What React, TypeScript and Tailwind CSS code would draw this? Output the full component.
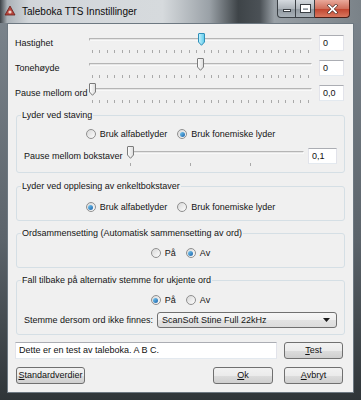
import React from "react";

const FONT = "font-['Liberation_Sans',Arial,sans-serif]";

function Thumb({ active }: { active?: boolean }) {
  return (
    <svg width="7" height="13" viewBox="0 0 7 13" className="block">
      <defs>
        <linearGradient id={active ? "ta" : "tn"} x1="0" y1="0" x2="1" y2="0">
          <stop offset="0" stopColor={active ? "#c9f3ff" : "#ffffff"} />
          <stop offset="1" stopColor={active ? "#5ccbea" : "#dcdcdc"} />
        </linearGradient>
      </defs>
      <path
        d="M1 0.5 H6 Q6.5 0.5 6.5 1 V9 L3.5 12.3 L0.5 9 V1 Q0.5 0.5 1 0.5 Z"
        fill={`url(#${active ? "ta" : "tn"})`}
        stroke={active ? "#2f8fb8" : "#7b7b7b"}
        strokeWidth="1"
      />
    </svg>
  );
}

function Slider({ left, ticks, active }: { left: string; ticks: number; active?: boolean }) {
  return (
    <div className="relative h-[16px] flex-1">
      <div className="absolute left-0 right-0 top-[3px] h-[3px] border border-[#b5b5b5] border-b-[#f8f8f8] border-r-[#f8f8f8] bg-[#e6e6e6]" />
      <div className="absolute left-[3px] right-[3px] top-[15px] flex justify-between">
        {Array.from({ length: ticks }).map((_, i) => (
          <div key={i} className="w-px h-[3px] bg-[#a9a9a9]" />
        ))}
      </div>
      <div className="absolute top-[-2px]" style={{ left }}>
        <Thumb active={active} />
      </div>
    </div>
  );
}

function SliderTicks({ positions }: { positions: string[] }) {
  return (
    <>
      {positions.map((p, i) => (
        <div key={i} className="absolute top-[15px] w-px h-[3px] bg-[#a9a9a9]" style={{ left: p }} />
      ))}
    </>
  );
}

function TextBox({ value, className }: { value: string; className?: string }) {
  return (
    <div
      className={`h-[16px] bg-white border border-[#abadb3] border-l-[#e2e3ea] border-r-[#e2e3ea] border-b-[#e3e9ef] flex items-center pl-[3px] text-[9px] leading-[11px] text-[#111] ${className ?? ""}`}
    >
      {value}
    </div>
  );
}

function Radio({ checked, label }: { checked?: boolean; label: string }) {
  return (
    <div className="flex items-center gap-[4px]">
      <div className="w-[10px] h-[10px] rounded-full border border-[#8f8f8f] bg-gradient-to-br from-[#d8d8d8] to-[#fdfdfd] flex items-center justify-center">
        {checked && (
          <div className="w-[5px] h-[5px] rounded-full bg-gradient-to-br from-[#79cdf5] to-[#1a62a8]" />
        )}
      </div>
      <span>{label}</span>
    </div>
  );
}

function Button({ children, className }: { children: React.ReactNode; className?: string }) {
  return (
    <div
      className={`h-[17px] rounded-[3px] border border-[#707070] bg-[linear-gradient(to_bottom,#f2f2f2_0%,#ebebeb_50%,#dddddd_51%,#cfcfcf_100%)] flex items-center justify-center text-[9px] leading-[11px] text-[#111] ${className ?? ""}`}
    >
      {children}
    </div>
  );
}

function Group({ title, children, className }: { title: string; children: React.ReactNode; className?: string }) {
  return (
    <fieldset className={`mx-[8px] mr-[8px] border border-[#d5dfe5] rounded-[3px] ${className ?? ""}`}>
      <legend className="ml-[4px] px-[1px] leading-[11px]">{title}</legend>
      {children}
    </fieldset>
  );
}

export default function App() {
  return (
    <div className={`${FONT} w-[361px] h-[400px] flex flex-col bg-[linear-gradient(to_bottom,#7d868e,#5b636a_60%,#2f3538)] text-[9px] leading-[11px] text-[#141414]`}>
      {/* Title bar */}
      <div className="h-[23px] flex items-start bg-[linear-gradient(to_right,#3c4247_0%,#aab1b7_2%,#d2d6da_8%,#d6dadd_45%,#9aa1a7_58%,#3e4448_66%,#4b5156_72%,#99a0a6_76%,#7a8288_100%)]">
        <div className="ml-[4px] mt-[5px] w-[12px] h-[12px] flex items-center justify-center">
          <svg width="12" height="12" viewBox="0 0 12 12">
            <path d="M6 1 L11 10 H1 Z" fill="#b8443c" stroke="#6a1f1a" strokeWidth="0.8" />
            <circle cx="6" cy="7" r="1.6" fill="#e9d2c8" />
          </svg>
        </div>
        <div className="ml-[6px] mt-[6px] text-[10px] leading-[12px] text-[#0c0c0c]">Taleboka TTS Innstillinger</div>
        <div className="ml-auto mr-[11px] flex h-[19px]">
          <div className="w-[19px] h-[18px] rounded-bl-[4px] border border-[#3b4045] border-t-0 bg-[linear-gradient(to_bottom,#d5dadf,#aeb5bb_50%,#8f979e_51%,#a9b1b8)] flex items-center justify-center">
            <div className="w-[8px] h-[3px] bg-white border border-[#3a3f44] mt-[4px]" />
          </div>
          <div className="w-[19px] h-[18px] border border-l-0 border-[#3b4045] border-t-0 bg-[linear-gradient(to_bottom,#d5dadf,#aeb5bb_50%,#8f979e_51%,#a9b1b8)] flex items-center justify-center">
            <div className="w-[9px] h-[7px] border-2 border-white border-t-[3px] outline outline-1 outline-[#3a3f44]" />
          </div>
          <div className="w-[35px] h-[18px] rounded-br-[4px] border border-l-0 border-[#4a1d16] border-t-0 bg-[linear-gradient(to_bottom,#e9a99b,#d0705d_50%,#c0422c_51%,#d8775f)] flex items-center justify-center">
            <svg width="11" height="10" viewBox="0 0 11 10">
              <path d="M2 1.5 L9 8.5 M9 1.5 L2 8.5" stroke="#3a1a14" strokeWidth="3" strokeLinecap="square" />
              <path d="M2 1.5 L9 8.5 M9 1.5 L2 8.5" stroke="#ffffff" strokeWidth="1.8" strokeLinecap="square" />
            </svg>
          </div>
        </div>
      </div>

      {/* Frame + client */}
      <div className="flex-1 flex px-[7px] pb-[7px]">
        <div className="flex-1 border border-[#6d7881] bg-[#f0f0f0] flex flex-col">
          {/* Row 1 */}
          <div className="mt-[11px] h-[16px] flex items-center pl-[7px] pr-[9px]">
            <div className="w-[74px]">Hastighet</div>
            <Slider left="calc(50% - 3px)" ticks={30} active />
            <TextBox value="0" className="ml-[7px] w-[25px]" />
          </div>
          {/* Row 2 */}
          <div className="mt-[9px] h-[16px] flex items-center pl-[7px] pr-[9px]">
            <div className="w-[74px]">Tonehøyde</div>
            <Slider left="calc(50% - 4px)" ticks={30} />
            <TextBox value="0" className="ml-[7px] w-[25px]" />
          </div>
          {/* Row 3 */}
          <div className="mt-[9px] h-[16px] flex items-center pl-[7px] pr-[9px]">
            <div className="w-[74px]">Pause mellom ord</div>
            <Slider left="0px" ticks={30} />
            <TextBox value="0,0" className="ml-[7px] w-[25px]" />
          </div>

          {/* Group 1 */}
          <Group title="Lyder ved staving" className="mt-[9px] pb-[8px]">
            <div className="mt-[7px] h-[12px] flex items-center justify-center gap-[10px]">
              <Radio label="Bruk alfabetlyder" />
              <Radio label="Bruk fonemiske lyder" checked />
            </div>
            <div className="mt-[8px] h-[16px] flex items-center pl-[7px] pr-[7px]">
              <div className="w-[103px]">Pause mellom bokstaver</div>
              <div className="relative h-[16px] flex-1">
                <div className="absolute left-0 right-0 top-[3px] h-[3px] border border-[#b5b5b5] border-b-[#f8f8f8] border-r-[#f8f8f8] bg-[#e6e6e6]" />
                <SliderTicks positions={["3px", "63px", "123px"]} />
                <div className="absolute top-[-2px] left-0">
                  <Thumb />
                </div>
              </div>
              <TextBox value="0,1" className="ml-[4px] w-[29px]" />
            </div>
          </Group>

          {/* Group 2 */}
          <Group title="Lyder ved opplesing av enkeltbokstaver" className="mt-[8px] pb-[7px]">
            <div className="mt-[9px] h-[12px] flex items-center justify-center gap-[10px]">
              <Radio label="Bruk alfabetlyder" checked />
              <Radio label="Bruk fonemiske lyder" />
            </div>
          </Group>

          {/* Group 3 */}
          <Group title="Ordsammensetting (Automatisk sammensetting av ord)" className="mt-[7px] pb-[8px]">
            <div className="mt-[8px] h-[12px] flex items-center justify-center gap-[10px]">
              <Radio label="På" />
              <Radio label="Av" checked />
            </div>
          </Group>

          {/* Group 4 */}
          <Group title="Fall tilbake på alternativ stemme for ukjente ord" className="mt-[7px] pb-[6px]">
            <div className="mt-[8px] h-[12px] flex items-center justify-center gap-[10px]">
              <Radio label="På" checked />
              <Radio label="Av" />
            </div>
            <div className="mt-[6px] h-[16px] flex items-center pl-[7px] pr-[7px]">
              <div className="w-[133px]">Stemme dersom ord ikke finnes:</div>
              <div className="flex-1 h-[16px] rounded-[3px] border border-[#707070] bg-[linear-gradient(to_bottom,#f6f6f6_0%,#efefef_50%,#e3e3e3_51%,#dcdcdc_100%)] flex items-center pl-[4px] pr-[6px]">
                <span className="flex-1">ScanSoft Stine Full 22kHz</span>
                <svg width="7" height="4" viewBox="0 0 7 4">
                  <path d="M0 0 H7 L3.5 4 Z" fill="#1a1a1a" />
                </svg>
              </div>
            </div>
          </Group>

          {/* Test row */}
          <div className="mt-[7px] flex items-center pl-[7px] pr-[10px] gap-[7px]">
            <TextBox value="Dette er en test av taleboka. A B C." className="flex-1 h-[17px]" />
            <Button className="w-[59px]">
              <span><span className="underline">T</span>est</span>
            </Button>
          </div>

          {/* Buttons row */}
          <div className="mt-[8px] flex items-center pl-[8px] pr-[10px]">
            <Button className="w-[69px]">
              <span><span className="underline">S</span>tandardverdier</span>
            </Button>
            <Button className="w-[60px] ml-auto">
              <span><span className="underline">O</span>k</span>
            </Button>
            <Button className="w-[59px] ml-[11px]">
              <span><span className="underline">A</span>vbryt</span>
            </Button>
          </div>
        </div>
      </div>
    </div>
  );
}
